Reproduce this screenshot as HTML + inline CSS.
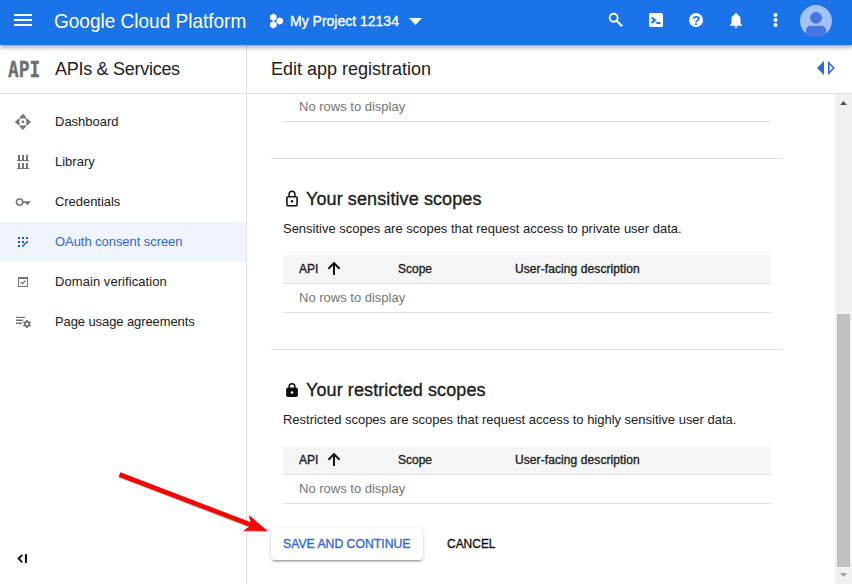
<!DOCTYPE html>
<html lang="en">
<head>
<meta charset="utf-8">
<title>Edit app registration – APIs &amp; Services – Google Cloud Platform</title>
<style>
*{box-sizing:border-box;margin:0;padding:0}
html,body{width:852px;height:584px;overflow:hidden;background:#fff}
body{font-family:"Liberation Sans",Arial,sans-serif;color:#212121;position:relative}
.abs{position:absolute}
.t{position:absolute;white-space:nowrap;line-height:1}
.m{-webkit-text-stroke:.35px currentColor}
#topbar{left:0;top:0;width:852px;height:45px;background:#1a73e8;box-shadow:0 2px 5px rgba(0,0,0,.4);z-index:5}
#topbar .t{color:#fff}
#side{left:0;top:45px;width:247px;height:539px;background:#fff;border-right:1px solid #e0e0e0}
#sidehead{left:0;top:45px;width:246px;height:49px;border-bottom:1px solid #e0e0e0}
#mainhead{left:247px;top:45px;width:605px;height:49px;border-bottom:1px solid #e0e0e0;background:#fff}
.nav{left:0;width:246px;height:40px}
.nav .t{left:55px;top:14px;font-size:13px;color:#212121}
.nav.sel{background:#eff4fe}
.nav.sel .t{color:#3367d6}
.hr{height:1px;background:#e0e0e0}
.th{background:#f5f5f5;height:29px;left:283px;width:488px;border-bottom:1px solid #e0e0e0}
.th .t{font-size:12px;color:#212121;top:8px}
.cell{font-size:13px;color:#757575}
h2.t{font-size:18px;font-weight:normal;color:#212121}
.desc{font-size:13px;color:#212121;letter-spacing:-.015px}
#sb{left:835px;top:94px;width:17px;height:490px;background:#f1f1f1}
#thumb{left:837px;top:314px;width:13px;height:253px;background:#c1c1c1}
</style>
</head>
<body>
<!-- side + headers -->
<div id="side" class="abs"></div>
<div id="sidehead" class="abs"></div>
<div id="mainhead" class="abs"></div>

<div id="topbar" class="abs">
  <svg class="abs" style="left:14px;top:14px" width="18" height="12" viewBox="0 0 18 12"><path d="M0 0h18v2H0zM0 5h18v2H0zM0 10h18v2H0z" fill="#fff"/></svg>
  <div class="t" id="gcp" style="left:54px;top:10px;font-size:21px;transform:scaleX(.905);transform-origin:0 50%">Google Cloud Platform</div>
  <svg class="abs" style="left:269px;top:13px" width="16" height="16" viewBox="269 13 16 16" fill="#fff"><polygon points="276.50,19.15 273.30,21.00 270.10,19.15 270.10,15.45 273.30,13.60 276.50,15.45"/><polygon points="276.50,26.55 273.30,28.40 270.10,26.55 270.10,22.85 273.30,21.00 276.50,22.85"/><polygon points="283.00,22.85 279.80,24.70 276.60,22.85 276.60,19.15 279.80,17.30 283.00,19.15"/></svg>
  <div class="t m" id="proj" style="left:290px;top:14px;font-size:14px">My Project 12134</div>
  <svg class="abs" style="left:409px;top:18px" width="13" height="7" viewBox="0 0 13 7"><path d="M0 0h13L6.500 7z" fill="#fff"/></svg>
  <!-- search -->
  <svg class="abs" style="left:608px;top:12px" width="15" height="15" viewBox="0 0 15 15"><circle cx="5.600" cy="5.700" r="4" fill="none" stroke="#fff" stroke-width="1.900"/><path d="M8.600 8.700L14.100 14.200" stroke="#fff" stroke-width="2.200" fill="none"/></svg>
  <!-- shell -->
  <svg class="abs" style="left:649px;top:13px" width="14" height="14" viewBox="0 0 14 14"><rect width="14" height="14" rx="1.500" fill="#fff"/><path d="M2.600 4.500l3.400 2.700-3.400 2.700" stroke="#1a73e8" stroke-width="2" fill="none"/><path d="M7.300 10h4.200" stroke="#1a73e8" stroke-width="2"/></svg>
  <!-- help -->
  <svg class="abs" style="left:689px;top:13px" width="14" height="14" viewBox="0 0 14 14"><circle cx="7" cy="7" r="7" fill="#fff"/><text x="7.100" y="11.800" text-anchor="middle" font-family="Liberation Sans, sans-serif" font-weight="bold" font-size="13.500" fill="#1a73e8">?</text></svg>
  <!-- bell -->
  <svg class="abs" style="left:727px;top:11px" width="18" height="18" viewBox="0 0 24 24" fill="#fff"><path d="M12 22.500c1.100 0 2-.9 2-2h-4a2 2 0 0 0 2 2zm6-6v-5.500c0-3.070-1.640-5.640-4.500-6.320V4c0-.83-.67-1.500-1.500-1.500s-1.500.67-1.500 1.500v.68C7.630 5.360 6 7.920 6 11v5.500l-2 2v1h16v-1l-2-2z"/></svg>
  <!-- more -->
  <svg class="abs" style="left:773px;top:13px" width="5" height="14" viewBox="0 0 5 14" fill="#fff"><circle cx="2.500" cy="2" r="2"/><circle cx="2.500" cy="7" r="2"/><circle cx="2.500" cy="12" r="2"/></svg>
  <!-- avatar -->
  <svg class="abs" style="left:800px;top:5px" width="32" height="32" viewBox="0 0 32 32"><defs><clipPath id="av"><circle cx="16" cy="16" r="16"/></clipPath></defs><circle cx="16" cy="16" r="16" fill="#a1c2fa"/><g clip-path="url(#av)" fill="#4674e0"><circle cx="16" cy="12.800" r="5.900"/><path d="M6 32v-6.500c0-3 2.500-4.700 5-4.700h10c2.500 0 5 1.700 5 4.700V32z"/></g></svg>
</div>

<!-- sidebar header -->
<div class="t" id="apilogo" style="left:7.5px;top:60px;font-family:'DejaVu Sans Mono','Liberation Mono',monospace;font-weight:bold;font-size:21px;color:#6e6e6e;-webkit-text-stroke:.3px #6e6e6e;transform:scaleX(.85);transform-origin:0 0">API</div>
<div class="t" id="apis" style="left:55px;top:60px;font-size:18px;color:#212121;letter-spacing:-.28px">APIs &amp; Services</div>
<div class="t" id="edit" style="left:271px;top:60px;font-size:18px;color:#212121">Edit app registration</div>
<svg class="abs" style="left:817px;top:61px" width="18" height="14" viewBox="0 0 18 14"><path d="M7 0v14L0 7z" fill="#3367d6"/><path d="M11.800 1.800v10.400L16.800 7z" fill="none" stroke="#3367d6" stroke-width="1.600"/></svg>

<!-- nav -->
<div class="abs nav" style="top:101px"><div class="t">Dashboard</div></div>
<div class="abs nav" style="top:141px"><div class="t">Library</div></div>
<div class="abs nav" style="top:181px"><div class="t" style="letter-spacing:-.05px">Credentials</div></div>
<div class="abs nav sel" style="top:222px"><div class="t" style="top:13px;letter-spacing:-.06px">OAuth consent screen</div></div>
<div class="abs nav" style="top:261px"><div class="t" style="letter-spacing:.065px">Domain verification</div></div>
<div class="abs nav" style="top:301px"><div class="t" style="letter-spacing:-.1px">Page usage agreements</div></div>

<!-- sidebar icons -->
<svg class="abs" style="left:0;top:94px" width="46" height="490" viewBox="0 94 46 490">
  <g fill="#757575">
    <g transform="translate(22.900 121.900)"><path id="tri" d="M0-8.1L3.4-4.3L2.7-3Q0-4.2-2.7-3L-3.4-4.3z"/><path d="M0-8.1L3.4-4.3L2.7-3Q0-4.2-2.7-3L-3.4-4.3z" transform="rotate(90)"/><path d="M0-8.1L3.4-4.3L2.7-3Q0-4.2-2.7-3L-3.4-4.3z" transform="rotate(180)"/><path d="M0-8.1L3.4-4.3L2.7-3Q0-4.2-2.7-3L-3.4-4.3z" transform="rotate(270)"/><circle r="1.400"/></g>
    <path d="M18 155h2v5.500h-2zM22 155h2v5.500h-2zM26 155h2v5.500h-2zM17 160h12v1H17zM18 163h2v5.500h-2zM22 163h2v5.500h-2zM26 163h2v5.500h-2zM17 168h12v1H17z"/>
    <path d="M23 201.200h7v1.700h-7zM26 202.800h3v1.800h-3z"/>
    <path d="M16 316.7h9v1.3h-9zM16 319.6h7v1.3h-7zM16 322.6h6v1.3h-6z"/>
  </g>
  <circle cx="19.6" cy="202.1" r="3.2" fill="none" stroke="#757575" stroke-width="1.500"/>
  <g fill="#1a56db">
    <path d="M18 237h2v2h-2zM22 237h2v2h-2zM26 237h2v2h-2zM18 241h2v2h-2zM22 241h2v2h-2zM18 245h2v2h-2z"/>
  </g>
  <path d="M22.600 246.300L27.500 241.500" stroke="#2a5fdb" stroke-width="1.600" stroke-linecap="round" fill="none"/>
  <rect x="18.500" y="277.500" width="9" height="9" fill="none" stroke="#757575" stroke-width="1"/>
  <path d="M18 278h10" stroke="#757575" stroke-width="2"/>
  <path d="M20.6 282.3l1.8 1.5 3.1-3.2" stroke="#757575" stroke-width="1.3" fill="none"/>
  <g transform="translate(27 324)">
    <path d="M-.7-3.900h1.400l.3 1.100 1 .6 1.100-.4.700 1.200-.8.800v1.200l.8.800-.7 1.200-1.100-.4-1 .6-.3 1.100h-1.400l-.3-1.100-1-.6-1.100.4-.7-1.200.8-.8v-1.200l-.8-.8.7-1.200 1.100.4 1-.6z" fill="#757575" transform="scale(1.050)"/>
    <circle r="1.300" fill="#fff"/>
  </g>
  <path d="M22.3 554.8l-3.7 3.8 3.7 3.8" stroke="#111" stroke-width="1.9" fill="none"/>
  <path d="M25.95 554.2v8.7" stroke="#111" stroke-width="2.1" fill="none"/>
</svg>

<!-- main -->
<div class="t cell" style="left:299px;top:100px">No rows to display</div>
<div class="abs hr" style="left:283px;top:121px;width:488px"></div>
<div class="abs hr" style="left:271px;top:158px;width:512px"></div>

<svg class="abs" style="left:284px;top:189px" width="16" height="19" viewBox="284 189 16 19"><rect x="286.900" y="196.800" width="10.200" height="8.900" rx="1.300" fill="none" stroke="#111" stroke-width="1.600"/><path d="M289.100 196.500v-2.300a2.900 2.900 0 0 1 5.800 0v2.300" fill="none" stroke="#111" stroke-width="1.500"/><circle cx="292" cy="201.300" r="1.300" fill="#111"/></svg>
<h2 class="t m" id="h1" style="left:306px;top:190px;letter-spacing:.1px">Your sensitive scopes</h2>
<div class="t desc" id="d1" style="left:283px;top:222px">Sensitive scopes are scopes that request access to private user data.</div>
<div class="abs th" style="top:255px"><div class="t m" style="left:16px">API</div><div class="t m" style="left:115px">Scope</div><div class="t m" style="left:232px;letter-spacing:.09px">User-facing description</div>
<svg class="abs" style="left:44px;top:6px" width="14" height="15" viewBox="0 0 14 15"><path d="M7 14V2M1.400 7.700L7 2.100l5.600 5.600" stroke="#111" stroke-width="2" fill="none"/></svg></div>
<div class="t cell" style="left:299px;top:291px">No rows to display</div>
<div class="abs hr" style="left:283px;top:312px;width:488px"></div>
<div class="abs hr" style="left:271px;top:349px;width:512px"></div>

<svg class="abs" style="left:284px;top:380px" width="16" height="19" viewBox="284 380 16 19"><rect x="286.100" y="387.500" width="11.800" height="9.600" rx="1.800" fill="#111"/><path d="M289.100 388v-1.300a2.900 2.900 0 0 1 5.800 0v1.300" fill="none" stroke="#111" stroke-width="1.500"/><circle cx="292" cy="392.500" r="1.300" fill="#fff"/></svg>
<h2 class="t m" id="h2" style="left:306px;top:381px;letter-spacing:.1px">Your restricted scopes</h2>
<div class="t desc" id="d2" style="left:283px;top:413px">Restricted scopes are scopes that request access to highly sensitive user data.</div>
<div class="abs th" style="top:446px"><div class="t m" style="left:16px">API</div><div class="t m" style="left:115px">Scope</div><div class="t m" style="left:232px;letter-spacing:.09px">User-facing description</div>
<svg class="abs" style="left:44px;top:6px" width="14" height="15" viewBox="0 0 14 15"><path d="M7 14V2M1.400 7.700L7 2.100l5.600 5.600" stroke="#111" stroke-width="2" fill="none"/></svg></div>
<div class="t cell" style="left:299px;top:482px">No rows to display</div>
<div class="abs hr" style="left:283px;top:503px;width:488px"></div>

<div class="abs" id="save" style="left:271px;top:528px;width:152px;height:32px;border-radius:4px;background:#fff;box-shadow:0 3px 1px -2px rgba(0,0,0,.2),0 2px 2px 0 rgba(0,0,0,.14),0 1px 5px 0 rgba(0,0,0,.12)"><div class="t m" id="savet" style="left:12px;top:9px;font-size:13px;color:#3367d6;transform:scaleX(.94);transform-origin:0 50%">SAVE AND CONTINUE</div></div>
<div class="t m" id="cancel" style="left:447px;top:537px;font-size:13px;color:#111;transform:scaleX(.92);transform-origin:0 50%">CANCEL</div>

<!-- scrollbar -->
<div class="abs" id="sb"></div>
<div class="abs" id="thumb"></div>
<svg class="abs" style="left:840px;top:101px" width="7" height="4" viewBox="0 0 7 4"><path d="M0 4h7L3.500 0z" fill="#505050"/></svg>
<svg class="abs" style="left:840px;top:573px" width="7" height="4" viewBox="0 0 7 4"><path d="M0 0h7L3.500 4z" fill="#a3a3a3"/></svg>

<!-- arrow annotation -->
<svg class="abs" style="left:0;top:0;z-index:9;pointer-events:none" width="852" height="584" viewBox="0 0 852 584"><g opacity=".45" transform="translate(-.3 .8)"><path d="M119.500 474.500L252 525.200" stroke="#555" stroke-width="4.600" fill="none"/><path d="M267.800 531L243.300 530.700L251.500 525L248.800 515z" fill="#555"/></g><path d="M119.500 474.500L252 525.200" stroke="#ff0000" stroke-width="4.600" fill="none"/><path d="M267.800 531L243.300 530.700L251.500 525L248.800 515z" fill="#ff0000"/></svg>
</body>
</html>
